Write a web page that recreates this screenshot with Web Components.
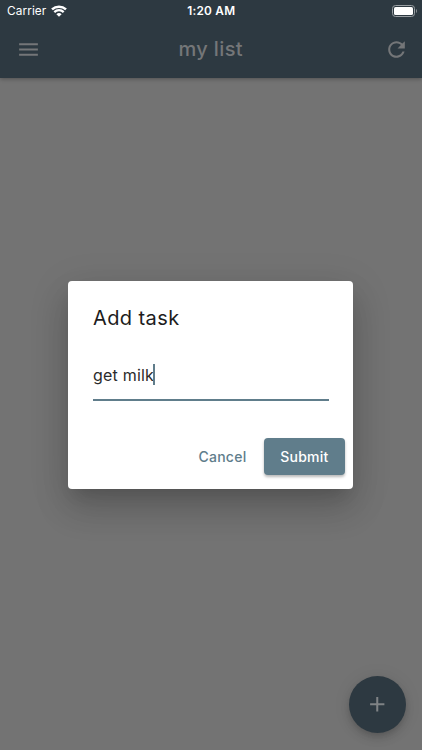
<!DOCTYPE html>
<html lang="en">
<head>
<meta charset="utf-8">
<meta name="viewport" content="width=device-width, initial-scale=1">
<title>my list</title>
<style>
    :root {
        --bar-color: #2d3941;
        --dimmed-color: #747678;
        --primary-color: #607d8b;
        --backdrop-color: #737373;
    }
    html, body {
        margin: 0;
        height: 100%;
        overflow: hidden;
        font-family: Inter, "Liberation Sans", sans-serif;
    }
</style>
</head>
<body>
<task-screen>
    <status-bar slot="top" carrier="Carrier" time="1:20 AM"></status-bar>
    <app-bar slot="top">my list</app-bar>
    <fab-button slot="fab"></fab-button>
    <task-dialog slot="dialog">
        <span slot="title">Add task</span>
        <task-input slot="content">get milk</task-input>
        <dialog-button slot="actions">Cancel</dialog-button>
        <dialog-button slot="actions" raised>Submit</dialog-button>
    </task-dialog>
</task-screen>

<script>
class BaseElement extends HTMLElement
{
    constructor(){
        super();
        this.attachShadow({mode:"open"});
    }

    connectedCallback(){
        const template = document.createElement("template");
        template.innerHTML = this.getStyles() + this.getMarkup();
        this.shadowRoot.replaceChildren(template.content.cloneNode(true));
    }
}

class TaskScreen extends BaseElement
{
    getMarkup(){
        return `
        <header class="top"><slot name="top"></slot></header>
        <div class="fab"><slot name="fab"></slot></div>
        <div class="overlay"><slot name="dialog"></slot></div>
        `;
    }

    getStyles(){
        return `
        <style>
            :host {
                display: flex;
                flex-direction: column;
                justify-content: space-between;
                position: relative;
                height: 100%;
                background: var(--backdrop-color);
            }
            .top {
                height: 77.5px;
                background: var(--bar-color);
                box-shadow: 0 1px 4px rgba(0, 0, 0, 0.3);
            }
            .fab {
                display: flex;
                justify-content: flex-end;
                padding: 0 16.5px 17px 0;
            }
            .overlay {
                position: absolute;
                inset: 0;
                display: flex;
                justify-content: center;
                align-items: center;
                padding: 20px 1px 0 0;
            }
        </style>
        `;
    }
}

class StatusBar extends BaseElement
{
    getMarkup(){
        return `
        <div class="left">
            <span class="carrier">${this.getAttribute("carrier")}</span>
            <svg class="wifi" width="16" height="12" viewBox="0 0 16 12" fill="none" stroke="#fff">
                <path d="M1 4.400C5 .7 11 .7 15 4.400" stroke-width="2.5"/>
                <path d="M3.300 7.100C6 4.500 10 4.500 12.700 7.100" stroke-width="2.200"/>
                <path d="M5.400 9.200C6.800 7.700 9.200 7.700 10.600 9.200L8 11.800z" fill="#fff" stroke="none"/>
            </svg>
        </div>
        <span class="time">${this.getAttribute("time")}</span>
        <div class="right">
            <svg width="26" height="12" viewBox="0 0 26 12">
                <rect x=".5" y=".5" width="22" height="11" rx="3" fill="none" stroke="#999fa3"/>
                <rect x="2" y="2" width="19" height="8" rx="1.6" fill="#fff"/>
                <path d="M24 4v4c1.200-.5 1.200-3.500 0-4z" fill="#999fa3"/>
            </svg>
        </div>
        `;
    }

    getStyles(){
        return `
        <style>
            :host {
                display: grid;
                grid-template-columns: 1fr auto 1fr;
                align-items: center;
                height: 21px;
                padding: 0 4.5px 0 7px;
                color: white;
                font-size: 11.8px;
            }
            .left {
                display: flex;
                align-items: center;
                gap: 4.5px;
            }
            .carrier {
                letter-spacing: 0.1px;
                padding-top: 1px;
            }
            .time {
                margin: 0 1px 0 -1px;
                font-weight: 600;
                letter-spacing: 0.25px;
                padding-top: 1px;
            }
            .right {
                display: flex;
                justify-content: flex-end;
            }
            svg { display: block; }
        </style>
        `;
    }
}

class AppBar extends BaseElement
{
    getMarkup(){
        return `
        <svg width="24" height="24" viewBox="0 0 24 24" fill="currentColor">
            <path d="M3 18h18v-2H3v2zm0-5h18v-2H3v2zm0-7v2h18V6H3z"/>
        </svg>
        <h1><slot></slot></h1>
        <svg width="24" height="24" viewBox="0 0 24 24" fill="currentColor">
            <path d="M17.650 6.350C16.200 4.900 14.210 4 12 4c-4.420 0-7.990 3.580-7.990 8s3.570 8 7.990 8c3.730 0 6.840-2.550 7.730-6h-2.080c-.82 2.330-3.040 4-5.650 4-3.310 0-6-2.690-6-6s2.690-6 6-6c1.660 0 3.140.69 4.220 1.780L13 11h7V4l-2.350 2.350z"/>
        </svg>
        `;
    }

    getStyles(){
        return `
        <style>
            :host {
                display: flex;
                align-items: center;
                justify-content: space-between;
                height: 56px;
                padding: 0 12.5px 0 16px;
                color: var(--dimmed-color);
            }
            h1 {
                margin: 0 4px 0 0;
                font-size: 20px;
                font-weight: 500;
                letter-spacing: 0.38px;
            }
            svg {
                display: block;
                width: 25px;
                height: 25px;
            }
        </style>
        `;
    }
}

class FabButton extends BaseElement
{
    getMarkup(){
        return `
        <button aria-label="Add">
            <svg width="24.5" height="24.5" viewBox="0 0 24 24" fill="currentColor">
                <path d="M19 13h-6v6h-2v-6H5v-2h6V5h2v6h6v2z"/>
            </svg>
        </button>
        `;
    }

    getStyles(){
        return `
        <style>
            :host { display: block; }
            button {
                display: flex;
                align-items: center;
                justify-content: center;
                width: 57px;
                height: 57px;
                padding: 0;
                border: none;
                border-radius: 50%;
                color: #7f8385;
                background: var(--bar-color);
                box-shadow: 0 3px 5px -1px rgba(0, 0, 0, 0.1),
                            0 6px 10px rgba(0, 0, 0, 0.1),
                            0 1px 18px rgba(0, 0, 0, 0.08);
            }
        </style>
        `;
    }
}

class TaskDialog extends BaseElement
{
    getMarkup(){
        return `
        <div class="title"><slot name="title"></slot></div>
        <div class="content"><slot name="content"></slot></div>
        <div class="actions"><slot name="actions"></slot></div>
        `;
    }

    getStyles(){
        return `
        <style>
            :host {
                display: flex;
                flex-direction: column;
                box-sizing: border-box;
                width: 285px;
                height: 208px;
                border-radius: 4px;
                background: white;
                box-shadow: 0 11px 15px -7px rgba(0, 0, 0, 0.12),
                            0 20px 34px 1px rgba(0, 0, 0, 0.14),
                            0 9px 40px 4px rgba(0, 0, 0, 0.09);
            }
            .title {
                padding: 24.5px 25px 0;
                font-size: 20px;
                line-height: 25px;
                letter-spacing: 0.4px;
                color: #1d1d1d;
            }
            .content {
                flex: 1;
                padding: 20px 24px 0 25px;
            }
            .actions {
                display: flex;
                justify-content: flex-end;
                align-items: center;
                gap: 1px;
                padding: 0 8px 14.5px;
            }
        </style>
        `;
    }
}

class TaskInput extends BaseElement
{
    getMarkup(){
        return `<slot></slot><i class="caret"></i>`;
    }

    getStyles(){
        return `
        <style>
            :host {
                display: flex;
                align-items: center;
                box-sizing: border-box;
                height: 50px;
                border-bottom: 2px solid var(--primary-color);
                font-size: 16px;
                letter-spacing: 0.2px;
                color: #2b2b2b;
            }
            .caret {
                width: 2px;
                height: 21px;
                margin-left: -1px;
                background: var(--primary-color);
            }
        </style>
        `;
    }
}

class DialogButton extends BaseElement
{
    getMarkup(){
        return `<button><slot></slot></button>`;
    }

    getStyles(){
        return `
        <style>
            :host { display: block; }
            button {
                display: block;
                height: 37px;
                padding: 0 16.4px;
                border: none;
                border-radius: 4px;
                background: none;
                color: var(--primary-color);
                font-family: inherit;
                font-size: 14px;
                font-weight: 500;
                letter-spacing: 0.25px;
            }
            :host([raised]) button {
                color: white;
                background: var(--primary-color);
                box-shadow: 0 2px 3px rgba(0, 0, 0, 0.28);
            }
        </style>
        `;
    }
}

customElements.define('task-screen',TaskScreen);
customElements.define('status-bar',StatusBar);
customElements.define('app-bar',AppBar);
customElements.define('fab-button',FabButton);
customElements.define('task-dialog',TaskDialog);
customElements.define('task-input',TaskInput);
customElements.define('dialog-button',DialogButton);
</script>
</body>
</html>
